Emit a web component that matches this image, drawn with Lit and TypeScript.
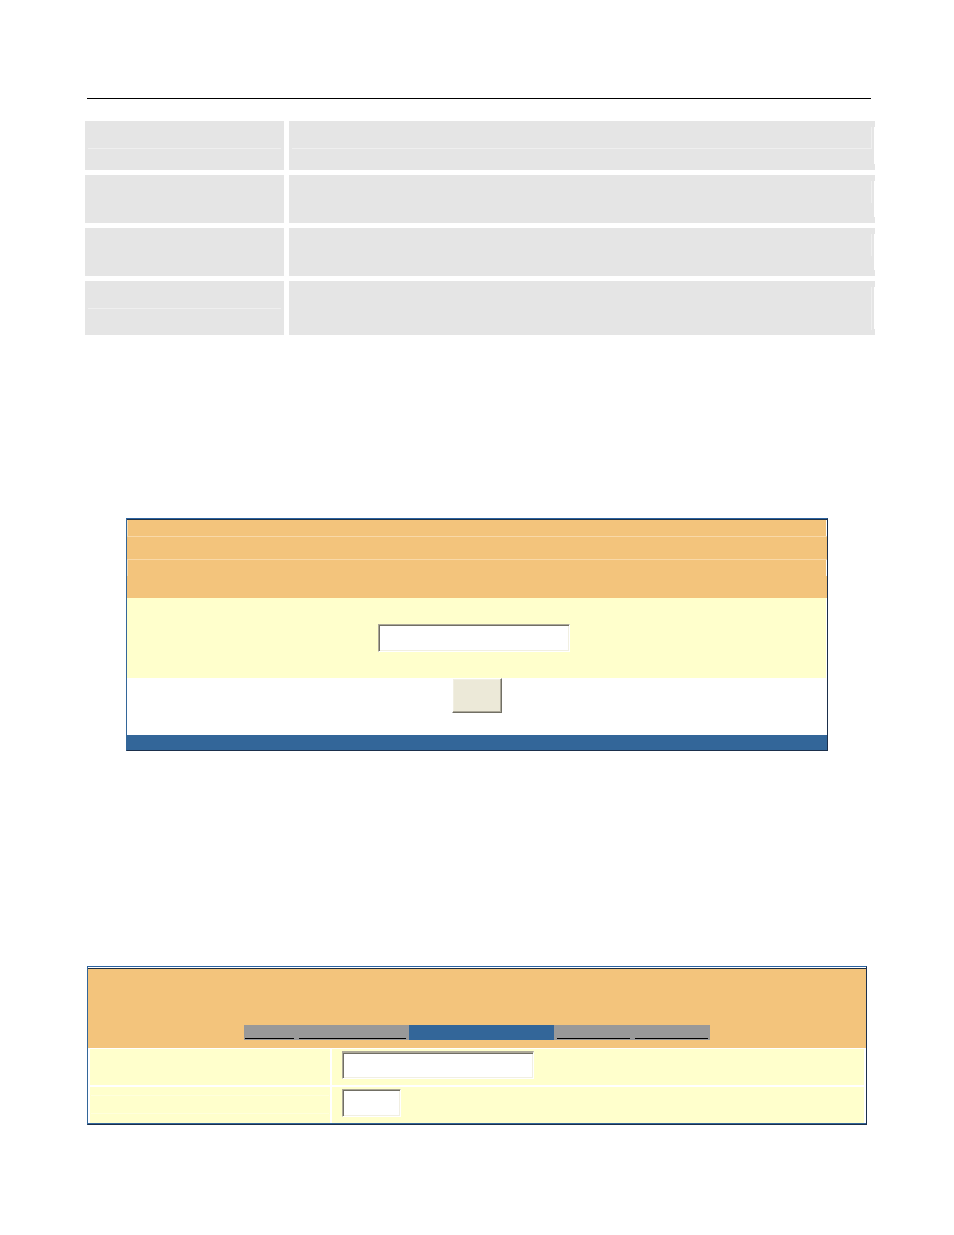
import { LitElement, html, css } from "lit";
import { customElement } from "lit/decorators.js";

@customElement("app-root")
export class AppRoot extends LitElement {
  static styles = css`
    :host {
      display: block;
      font-family: "Liberation Sans", Arial, sans-serif;
      font-size: 12px;
      background: #fff;
    }
    * { box-sizing: border-box; }
    .page {
      display: flex;
      flex-direction: column;
      padding: 98px 79px 110px 85px;
    }
    .rule {
      width: auto;
      height: 1px;
      margin: 0 4px 22px 2px;
      border: 0;
      background: #000;
    }
    .facts {
      width: 100%;
      table-layout: fixed;
      border-collapse: collapse;
    }
    .facts col.name { width: 204px; }
    .facts td { padding: 0 0 5px; vertical-align: top; }
    .facts td:first-child { padding-right: 5px; }
    .facts tr:last-child td { padding-bottom: 0; }
    .cell {
      display: flex;
      height: 48px;
      background: #e5e5e5;
    }
    .first .cell { height: 49px; }
    .last .cell { height: 54px; }
    .split {
      flex: 1;
      height: 28px;
      margin: 0 3px;
      border-bottom: 1px solid #efefef;
    }
    .plain { flex: 1; }
    .edge {
      width: 1px;
      height: 22px;
      margin: 6px 2px 0 0;
      background: #efefef;
    }
    .last .edge { height: 43px; }
    .notch {
      width: 1px;
      margin: 6px 0;
      background: #fff;
    }
    .wide .split { margin-right: 0; }

    .panel {
      border: 1px solid #1b2f4b;
      border-left-color: #336699;
      border-top-color: #2b62a0;
    }
    .login { margin: 183px 47px 0 41px; }
    .login-head { border-top: 1px solid #1f3044; background: #f3c47c; }
    .band {
      border: 0 solid #fff;
      border-width: 0 1px;
      border-left-color: #f8deb4;
      height: 16px;
    }
    .band-full {
      height: 24px;
      border-top: 1px solid #f9d9a8;
      border-bottom: 1px solid #f9d9a8;
    }
    .band-rest { height: 22px; }
    .login-body {
      display: flex;
      justify-content: center;
      height: 80px;
      margin-right: 1px;
      padding: 26px 5px 0 0;
      background: #ffffcc;
    }
    .actions {
      display: flex;
      justify-content: center;
      align-items: flex-start;
      height: 57px;
    }
    .login-foot { height: 15px; background: #336699; }

    .field {
      height: 28px;
      margin: 0;
      padding: 0 4px;
      border: 1px solid;
      border-color: #aca899 #fff #fff #aca899;
      border-radius: 0;
      outline: 0;
      background: #fff;
      box-shadow: inset 1px 1px #716f64, inset -1px -1px #f1efe2;
      font: inherit;
    }
    .long { width: 192px; }
    .short { width: 59px; }
    .submit {
      width: 50px;
      height: 35px;
      padding: 0;
      border: 1px solid;
      border-color: #fff #716f64 #716f64 #fff;
      border-radius: 0;
      background: #ece9d8;
      box-shadow: inset -1px -1px #aca899, inset 1px 1px #f1efe2;
    }

    .settings { margin: 215px 8px 0 2px; }
    .settings-head {
      display: flex;
      justify-content: center;
      margin-top: 1px;
      border-top: 1px solid #1f3044;
      height: 80px;
      padding-top: 56px;
      background: #f3c47c;
    }
    .tabs { display: flex; height: 15px; background: #999; }
    .tabs a {
      height: 14px;
      border-bottom: 1px solid #000;
      text-decoration: none;
      color: #000;
    }
    .t1 { width: 49px; margin: 0 5px 0 1px; }
    .t2 { width: 107px; margin-right: 3px; }
    .tabs .current { width: 145px; height: 15px; border: 0; background: #336699; }
    .t3 { width: 73px; margin: 0 5px 0 3px; }
    .t4 { width: 73px; margin-right: 2px; }
    .form {
      display: grid;
      grid-template-columns: 240px 1fr;
      gap: 2px;
      padding: 1px 2px 0;
      border-bottom: 1px solid #336699;
    }
    .form label, .control { background: #ffffcc; height: 36px; }
    .control { padding: 2px 10px 0; }
    .control .long { border-top-width: 2px; }
    .form .lined {
      padding: 8px 1px;
    }
    .lined span {
      display: block;
      height: 19px;
      border: 1px solid #ffffdc;
      border-width: 1px 0;
    }
  `;

  private row(kind: string, split: [boolean, boolean]) {
    return html`<tr class=${kind}>
      <td><div class="cell"><div class=${split[0] ? "split" : "plain"}></div></div></td>
      <td>
        <div class="cell wide">
          <div class=${split[1] ? "split" : "plain"}></div>
          <div class="edge"></div>
          <div class="notch"></div>
        </div>
      </td>
    </tr>`;
  }

  render() {
    return html`<main class="page">
      <hr class="rule" />
      <table class="facts">
        <colgroup><col class="name" /><col /></colgroup>
        <tbody>
          ${this.row("first", [true, true])}
          ${this.row("", [false, false])}
          ${this.row("", [false, false])}
          ${this.row("last", [true, false])}
        </tbody>
      </table>

      <form class="panel login">
        <div class="login-head">
          <div class="band"></div>
          <div class="band-full"></div>
          <div class="band"></div>
          <div class="band-rest"></div>
        </div>
        <div class="login-body">
          <input class="field long" type="text" aria-label="Value" />
        </div>
        <div class="actions">
          <button class="submit" type="button" aria-label="Submit"></button>
        </div>
        <div class="login-foot"></div>
      </form>

      <form class="panel settings">
        <div class="settings-head">
          <nav class="tabs">
            <a class="t1" href="#one" aria-label="First section"></a>
            <a class="t2" href="#two" aria-label="Second section"></a>
            <a class="current" href="#three" aria-label="Current section"></a>
            <a class="t3" href="#four" aria-label="Fourth section"></a>
            <a class="t4" href="#five" aria-label="Fifth section"></a>
          </nav>
        </div>
        <div class="form">
          <label for="name"></label>
          <div class="control"><input id="name" class="field long" type="text" aria-label="Name" /></div>
          <label for="number" class="lined"><span></span></label>
          <div class="control"><input id="number" class="field short" type="text" aria-label="Number" /></div>
        </div>
      </form>
    </main>`;
  }
}
